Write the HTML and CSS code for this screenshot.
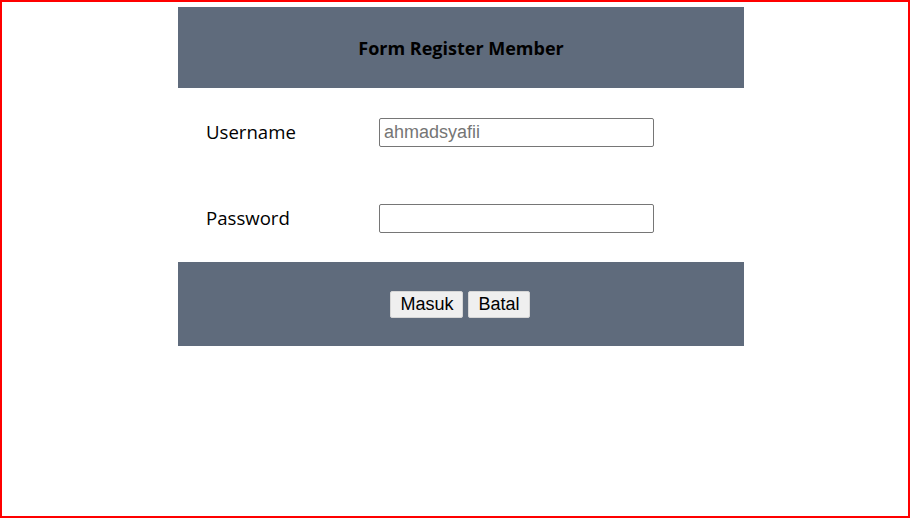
FILE: index.html
```html
<!DOCTYPE html>
<html>
<head>
<meta charset="utf-8">
<link rel="stylesheet" href="styles.css">
</head>
<body>
<div class="frame">
  <form class="panel">
    <div class="head">Form Register Member</div>
    <div class="fields">
      <label class="label" for="u">Username</label>
      <input class="input" id="u" type="text" placeholder="ahmadsyafii">
      <label class="label" for="p">Password</label>
      <input class="input" id="p" type="password">
    </div>
    <div class="foot">
      <button type="button" class="btn">Masuk</button>
      <button type="button" class="btn">Batal</button>
    </div>
  </form>
</div>
</body>
</html>
```
FILE: styles.css
```css
html, body { margin: 0; padding: 0; background: #fff; }
.frame {
  box-sizing: border-box;
  width: 910px;
  height: 518px;
  border: 2px solid #ff0000;
  padding: 5px 0 0 176px;
}
.panel {
  width: 566px;
  margin: 0;
}
.head {
  background: #5f6b7c;
  height: 81px;
  display: flex;
  align-items: center;
  justify-content: center;
  font-family: "Open Sans", sans-serif;
  font-weight: 700;
  font-size: 18px;
  color: #000;
}
.fields {
  display: grid;
  grid-template-columns: 173px 275px;
  row-gap: 57px;
  align-items: center;
  padding: 30px 0 29px 28px;
}
.label {
  font-family: "Open Sans", sans-serif;
  font-size: 18.6px;
  line-height: 24px;
  padding-bottom: 2px;
  color: #000;
}
.input {
  box-sizing: border-box;
  width: 275px;
  height: 29px;
  margin: 0;
  border: 1px solid #767676;
  border-radius: 2px;
  padding: 1px 4px;
  font-family: "Liberation Sans", Arial, sans-serif;
  font-size: 18px;
  color: #000;
}
.input::placeholder { color: #757575; }
.foot {
  background: #5f6b7c;
  height: 84px;
  display: flex;
  align-items: center;
  justify-content: center;
  gap: 5px;
  padding-right: 2px;
  box-sizing: border-box;
}
.btn {
  box-sizing: border-box;
  height: 27px;
  margin: 0;
  padding: 0 9px;
  background: #efefef;
  border: 1px solid #d6d6d6;
  border-radius: 2px;
  font-family: "Liberation Sans", Arial, sans-serif;
  font-size: 18px;
  color: #000;
}
```
